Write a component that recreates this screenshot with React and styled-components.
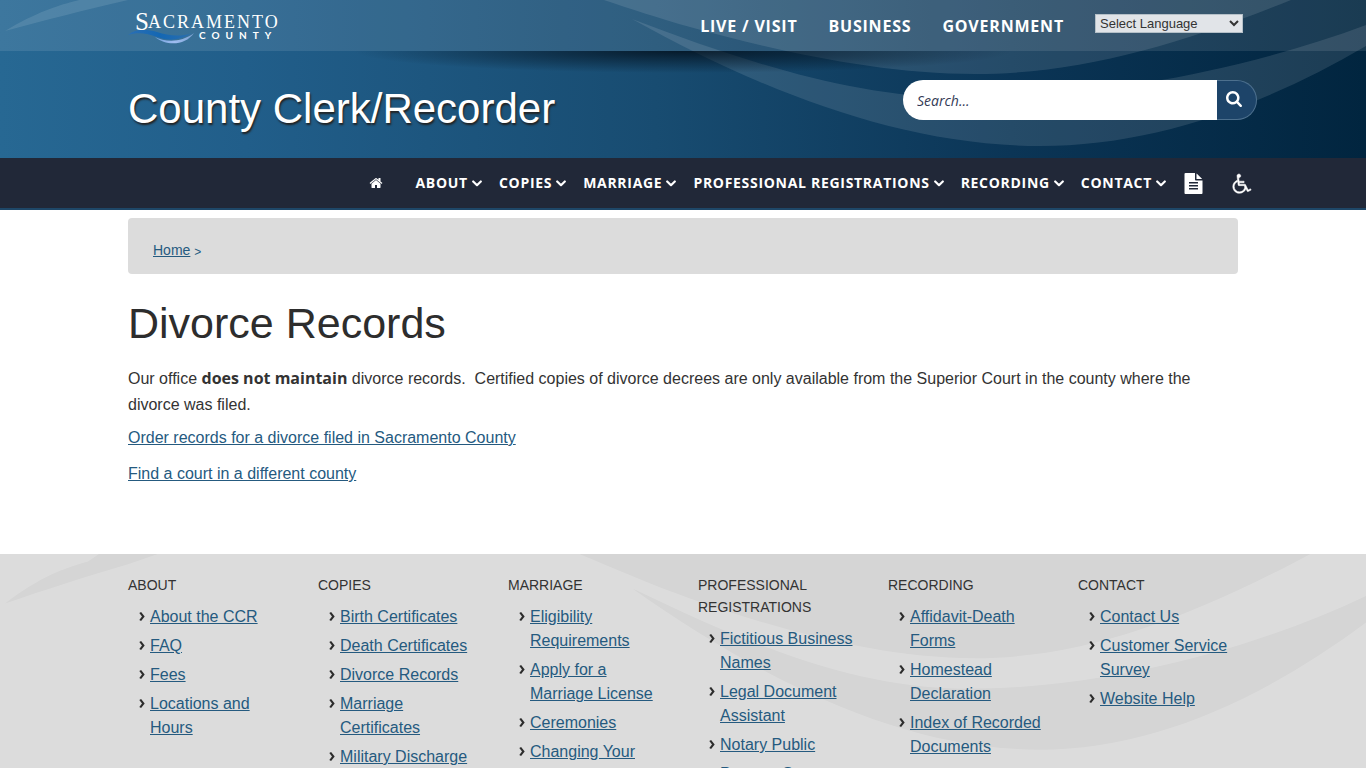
import React from "react";
import styled, { createGlobalStyle } from "styled-components";

const GlobalStyle = createGlobalStyle`
    * {
        box-sizing: border-box;
    }
    body {
        margin: 0;
        background: #ffffff;
        color: #333333;
        font-family: "Liberation Sans", Arial, sans-serif;
        font-size: 16px;
        line-height: 26px;
        overflow-x: hidden;
    }
    a {
        color: #255a7f;
    }
`;

//data
const topLinks = ["Live / Visit", "Business", "Government"];

const navLinks = [
    "About",
    "Copies",
    "Marriage",
    "Professional Registrations",
    "Recording",
    "Contact",
];

const footerColumns = [
    {
        title: "About",
        links: ["About the CCR", "FAQ", "Fees", "Locations and Hours"],
    },
    {
        title: "Copies",
        links: [
            "Birth Certificates",
            "Death Certificates",
            "Divorce Records",
            "Marriage Certificates",
            "Military Discharge",
        ],
    },
    {
        title: "Marriage",
        links: [
            "Eligibility Requirements",
            "Apply for a Marriage License",
            "Ceremonies",
            "Changing Your Name",
        ],
    },
    {
        title: "Professional Registrations",
        links: [
            "Fictitious Business Names",
            "Legal Document Assistant",
            "Notary Public",
            "Process Servers",
        ],
    },
    {
        title: "Recording",
        links: [
            "Affidavit-Death Forms",
            "Homestead Declaration",
            "Index of Recorded Documents",
        ],
    },
    {
        title: "Contact",
        links: ["Contact Us", "Customer Service Survey", "Website Help"],
    },
];

//drawings
const Waves = ({ viewBox }) => (
    <WaveArt viewBox={viewBox} preserveAspectRatio="none" aria-hidden="true">
        <path d="M5 31C40 10 65 3 88 -2L110 -14H180L128 0C85 10 45 20 5 31Z" />
        <path d="M560 -14C600 -2 640 13 690 27C780 52 880 74 975 74C1080 74 1180 45 1291 0L1325 -14Z" />
        <path d="M632 19C740 60 850 97 960 98C1090 99 1240 72 1366 25V46C1260 108 1150 146 1040 146C900 146 760 90 632 19Z" />
    </WaveArt>
);

const Logo = () => (
    <LogoArt viewBox="0 0 152 36" role="img" aria-label="Sacramento County">
        <defs>
            <linearGradient id="swell" x1="0" x2="1">
                <stop offset="0" stopColor="#2a6fb5" />
                <stop offset="0.5" stopColor="#1467b3" />
                <stop offset="1" stopColor="#2c6fae" />
            </linearGradient>
            <linearGradient id="crest" x1="0" x2="1">
                <stop offset="0" stopColor="#6fa0dc" />
                <stop offset="0.5" stopColor="#9fbdf0" />
                <stop offset="1" stopColor="#7ba2d2" />
            </linearGradient>
        </defs>
        <path
            fill="url(#swell)"
            d="M0 25C8 18 19 19 29 22C41 26 52 27 64 23C52 31 40 31 29 27C19 23 9 22 0 25Z"
        />
        <path
            fill="url(#crest)"
            d="M27 27C37 32 53 33 66 23C57 36 38 36 27 27Z"
        />
        <text
            x="7"
            y="20"
            fill="#ffffff"
            fontFamily="Liberation Serif, serif"
            fontSize="25"
        >
            S
        </text>
        <text
            x="20"
            y="18"
            fill="#ffffff"
            fontFamily="Liberation Serif, serif"
            fontSize="18"
            letterSpacing="2"
        >
            ACRAMENTO
        </text>
        <text
            x="71"
            y="29"
            fill="#ffffff"
            fontFamily="Lato, sans-serif"
            fontSize="10"
            fontWeight="700"
            letterSpacing="6"
        >
            COUNTY
        </text>
    </LogoArt>
);

const HomeIcon = () => (
    <Icon size={14} viewBox="0 0 1792 1792" aria-hidden="true">
        <path d="M1472 992v480q0 26-19 45t-45 19h-384v-384h-256v384h-384q-26 0-45-19t-19-45v-480q0-1 .5-3t.5-3l575-474 575 474q1 2 1 6zm223-69l-62 74q-8 9-21 11h-3q-13 0-21-7l-692-577-692 577q-12 8-24 7-13-2-21-11l-62-74q-8-10-7-23.5t11-21.5l719-599q32-26 76-26t76 26l244 204v-195q0-14 9-23t23-9h192q14 0 23 9t9 23v408l219 182q10 8 11 21.5t-7 23.5z" />
    </Icon>
);

const SearchIcon = () => (
    <Icon size={16} viewBox="64 128 1664 1664" aria-hidden="true">
        <path d="M1216 832q0-185-131.5-316.5t-316.5-131.5-316.5 131.5-131.5 316.5 131.5 316.5 316.5 131.5 316.5-131.5 131.5-316.5zm512 832q0 52-38 90t-90 38q-54 0-90-38l-343-342q-179 124-399 124-143 0-273.5-55.5t-225-150-150-225-55.5-273.5 55.5-273.5 150-225 225-150 273.5-55.5 273.5 55.5 225 150 150 225 55.5 273.5q0 220-124 399l343 343q37 37 37 90z" />
    </Icon>
);

const FileIcon = () => (
    <Icon size={21} viewBox="0 0 1792 1792" aria-hidden="true">
        <path d="M1596 476q14 14 28 36h-472v-472q22 14 36 28zm-476 164h544v1056q0 40-28 68t-68 28h-1344q-40 0-68-28t-28-68v-1600q0-40 28-68t68-28h800v544q0 40 28 68t68 28zm160 736v-64q0-14-9-23t-23-9h-704q-14 0-23 9t-9 23v64q0 14 9 23t23 9h704q14 0 23-9t9-23zm0-256v-64q0-14-9-23t-23-9h-704q-14 0-23 9t-9 23v64q0 14 9 23t23 9h704q14 0 23-9t9-23zm0-256v-64q0-14-9-23t-23-9h-704q-14 0-23 9t-9 23v64q0 14 9 23t23 9h704q14 0 23-9t9-23z" />
    </Icon>
);

const WheelchairIcon = () => (
    <Icon size={21} viewBox="0 0 1792 1792" aria-hidden="true">
        <path
            stroke="currentColor"
            strokeWidth="40"
            d="M1087 1131l102 204q-58 179-210 290t-339 111q-156 0-288.5-77.5t-210-210-77.5-288.5q0-181 104.5-330t274.5-211l17 131q-122 54-195 165.5t-73 244.5q0 185 131.5 316.5t316.5 131.5q126 0 232.5-65t165-175.5 49.5-236.5zm492 212l58 114-256 128q-13 7-29 7-40 0-57-35l-239-477h-472q-24 0-42.5-16.5t-21.5-40.5l-96-779q-2-16 6-42 14-51 57-82.5t97-31.5q66 0 113 47t47 113q0 69-52 117.5t-120 41.5l37 289h423v128h-407l16 128h455q40 0 57 35l228 455z"
        />
    </Icon>
);

const Caret = () => (
    <CaretArt viewBox="0 0 10 10" aria-hidden="true">
        <path d="M1.2 3.5L5 7.2L8.8 3.5" />
    </CaretArt>
);

const App = () => {
    return (
        <>
            <GlobalStyle />
            <Header>
                <Waves viewBox="0 0 1366 158" />
                <TopBar>
                    <TopInner>
                        <LogoLink href="#">
                            <Logo />
                        </LogoLink>
                        <TopNav>
                            {topLinks.map((link) => (
                                <TopLink href="#" key={link}>
                                    {link}
                                </TopLink>
                            ))}
                            <Language aria-label="Select Language">
                                <option>Select Language</option>
                            </Language>
                        </TopNav>
                    </TopInner>
                </TopBar>
                <Banner>
                    <BannerInner>
                        <SiteTitle>County Clerk/Recorder</SiteTitle>
                        <Search onSubmit={(e) => e.preventDefault()}>
                            <SearchInput
                                type="text"
                                aria-label="Search"
                                placeholder="Search..."
                            />
                            <SearchButton aria-label="Search">
                                <SearchIcon />
                            </SearchButton>
                        </Search>
                    </BannerInner>
                </Banner>
            </Header>
            <Nav>
                <NavInner>
                    <HomeLink href="#" aria-label="Home">
                        <HomeIcon />
                    </HomeLink>
                    {navLinks.map((link) => (
                        <NavLink href="#" key={link}>
                            {link}
                            <Caret />
                        </NavLink>
                    ))}
                    <ToolLinks>
                        <NavLink href="#" aria-label="Documents">
                            <FileIcon />
                        </NavLink>
                        <NavLink href="#" aria-label="Accessibility">
                            <WheelchairIcon />
                        </NavLink>
                    </ToolLinks>
                </NavInner>
            </Nav>
            <Main>
                <Breadcrumb>
                    <a href="#">Home</a>
                    <small>&gt;</small>
                </Breadcrumb>
                <h1>Divorce Records</h1>
                <p>
                    Our office <strong>does not maintain</strong> divorce
                    records.&nbsp; Certified copies of divorce decrees are only
                    available from the Superior Court in the county where the
                    divorce was filed.
                </p>
                <p>
                    <a href="#">
                        Order records for a divorce filed in Sacramento County
                    </a>
                </p>
                <p>
                    <a href="#">Find a court in a different county</a>
                </p>
            </Main>
            <Footer>
                <Waves viewBox="0 -8 1366 170" />
                <FooterGrid>
                    {footerColumns.map(({ title, links }) => (
                        <div key={title}>
                            <FooterTitle>{title}</FooterTitle>
                            <FooterList>
                                {links.map((link) => (
                                    <li key={link}>
                                        <Bullet
                                            viewBox="0 0 6 10"
                                            aria-hidden="true"
                                        >
                                            <path d="M0 1L2 0L6 5L2 10L0 9L3 5Z" />
                                        </Bullet>
                                        <a href="#">{link}</a>
                                    </li>
                                ))}
                            </FooterList>
                        </div>
                    ))}
                </FooterGrid>
            </Footer>
        </>
    );
};

//styles
const Container = styled.div`
    width: 100%;
    max-width: 1148px;
    margin: 0 auto;
    padding-left: 19px;
    display: flex;
    align-items: center;
`;

const WaveArt = styled.svg`
    position: absolute;
    top: 0;
    left: 0;
    width: 100%;
    height: 100%;
    pointer-events: none;
`;

const Icon = styled.svg`
    display: block;
    width: ${(props) => props.size}px;
    height: ${(props) => props.size}px;
    fill: currentColor;
`;

const CaretArt = styled.svg`
    width: 10px;
    height: 10px;
    fill: none;
    stroke: currentColor;
    stroke-width: 2.2;
    stroke-linecap: round;
    stroke-linejoin: round;
`;

const Header = styled.header`
    position: relative;
    background: linear-gradient(
        90deg,
        #276893 0%,
        #215e8a 18%,
        #184c71 48%,
        #0b3556 74%,
        #01253f 100%
    );
    ${WaveArt} {
        fill: rgba(255, 255, 255, 0.11);
    }
`;

const TopBar = styled.div`
    position: relative;
    height: 51px;
    background: rgba(255, 255, 255, 0.1);
`;

const TopInner = styled(Container)`
    justify-content: space-between;
    height: 100%;
    padding-right: 14px;
`;

const LogoLink = styled.a`
    display: block;
    padding-top: 4px;
`;

const LogoArt = styled.svg`
    display: block;
    width: 152px;
    height: 36px;
    overflow: visible;
`;

const TopNav = styled.nav`
    display: flex;
    align-items: center;
    gap: 31px;
`;

const TopLink = styled.a`
    color: #ffffff;
    font-family: "Open Sans", sans-serif;
    font-weight: 700;
    letter-spacing: 0.05em;
    text-decoration: none;
    text-transform: uppercase;
`;

const Language = styled.select`
    width: 148px;
    height: 19px;
    margin-bottom: 4px;
    padding: 0;
    border: 1px solid #b5c0c8;
    border-radius: 0;
    background: #e1e4e8;
    color: #333333;
    font-family: "Liberation Sans", Arial, sans-serif;
    font-size: 13px;
`;

const Banner = styled.div`
    position: relative;
    padding: 29px 0;
    background: radial-gradient(
            closest-side,
            rgba(0, 10, 20, 0.75),
            rgba(0, 10, 20, 0)
        )
        center -22px / 660px 44px no-repeat;
`;

const BannerInner = styled(Container)`
    align-items: flex-start;
    justify-content: space-between;
`;

const SiteTitle = styled.div`
    padding-top: 9px;
    color: #ffffff;
    font-size: 42px;
    line-height: 40px;
    text-shadow: 1px 2px 2px #222222;
`;

const Search = styled.form`
    display: flex;
    width: 354px;
    height: 40px;
`;

const SearchInput = styled.input`
    flex: 1;
    min-width: 0;
    padding: 0 14px;
    border: 0;
    border-radius: 20px 0 0 20px;
    background: #ffffff;
    font-family: "Open Sans", sans-serif;
    font-size: 14px;
    font-style: italic;
    &::placeholder {
        color: #333a55;
        opacity: 1;
    }
`;

const SearchButton = styled.button`
    display: flex;
    align-items: center;
    width: 40px;
    padding: 0 0 2px 9px;
    border: 1px solid #4d708e;
    border-left: 0;
    border-radius: 0 20px 20px 0;
    background: #1d4469;
    color: #ffffff;
`;

const Nav = styled.nav`
    background: #212838;
    border-bottom: 2px solid #1e4768;
`;

const NavInner = styled(Container)`
    justify-content: flex-end;
    gap: 17px;
    height: 50px;
    padding-right: 4px;
`;

const NavLink = styled.a`
    display: flex;
    align-items: center;
    gap: 4px;
    color: #ffffff;
    font-family: "Open Sans", sans-serif;
    font-size: 14px;
    font-weight: 700;
    letter-spacing: 0.05em;
    text-decoration: none;
    text-transform: uppercase;
`;

const HomeLink = styled(NavLink)`
    margin-right: 16px;
`;

const ToolLinks = styled.div`
    display: flex;
    gap: 28px;
`;

const Main = styled.main`
    width: 100%;
    max-width: 1110px;
    min-height: 344px;
    margin: 0 auto;
    padding-top: 8px;
    h1 {
        margin: 26px 0 19px;
        color: #2d2d2d;
        font-size: 43px;
        font-weight: 400;
        line-height: 46px;
    }
    p {
        margin: 0 0 10px;
    }
    p:first-of-type {
        margin-bottom: 7px;
    }
    strong {
        font-family: "Open Sans", sans-serif;
    }
`;

const Breadcrumb = styled.nav`
    display: flex;
    align-items: center;
    gap: 4px;
    height: 56px;
    padding: 8px 25px 0;
    border-radius: 4px;
    background: #dcdcdc;
    font-size: 14px;
    small {
        padding-top: 4px;
        color: #255a7f;
        font-size: 12px;
    }
`;

const Footer = styled.footer`
    position: relative;
    min-height: 216px;
    background: #dcdcdc;
    ${WaveArt} {
        height: 216px;
        fill: rgba(0, 0, 0, 0.03);
    }
`;

const FooterGrid = styled.div`
    position: relative;
    display: grid;
    grid-template-columns: repeat(6, 1fr);
    gap: 30px;
    width: 100%;
    max-width: 1110px;
    margin: 0 auto;
    padding: 20px 0 30px;
`;

const FooterTitle = styled.div`
    font-size: 14px;
    line-height: 22px;
    text-transform: uppercase;
`;

const FooterList = styled.ul`
    margin: 9px 0 0;
    padding: 0 0 0 11px;
    list-style: none;
    line-height: 24px;
    li {
        display: flex;
        align-items: flex-start;
        gap: 5px;
        margin-bottom: 5px;
    }
`;

const Bullet = styled.svg`
    flex: none;
    width: 6px;
    height: 9px;
    margin-top: 7px;
    fill: #2d2d2d;
`;

export default App;
